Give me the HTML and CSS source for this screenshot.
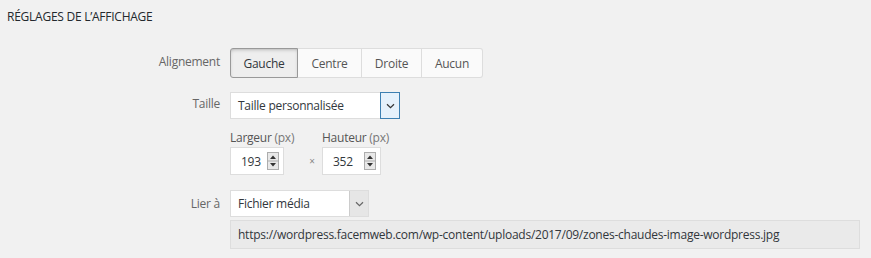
FILE: index.html
```html
<!DOCTYPE html>
<html lang="fr">
<head>
<meta charset="utf-8">
<link rel="stylesheet" href="styles.css">
</head>
<body>
<div class="panel">
  <h2 class="title">RÉGLAGES DE L’AFFICHAGE</h2>

  <div class="row row-align">
    <span class="label">Alignement</span>
    <div class="btn-group">
      <span class="btn active">Gauche</span>
      <span class="btn">Centre</span>
      <span class="btn">Droite</span>
      <span class="btn">Aucun</span>
    </div>
  </div>

  <div class="row row-size">
    <span class="label">Taille</span>
    <div class="select select-size focus">
      <span class="select-text">Taille personnalisée</span>
      <span class="select-arrow"><svg width="9" height="6" viewBox="0 0 9 6"><path d="M1 1.2 L4.5 4.6 L8 1.2" fill="none" stroke="#333" stroke-width="1.2"/></svg></span>
    </div>
  </div>

  <div class="row row-dims">
    <span class="label"></span>
    <div class="dims">
      <div class="dim dim-w">
        <span class="dim-label">Largeur <span class="unit">(px)</span></span>
        <div class="num">
          <span class="num-val">193</span>
          <span class="spin"><svg width="12" height="18" viewBox="0 0 12 18"><rect x="0.5" y="0.5" width="11" height="17" fill="#e8e8e8" stroke="#adadad"/><line x1="0.5" y1="9" x2="11.5" y2="9" stroke="#adadad"/><path d="M3 7 L6 3.5 L9 7 Z" fill="#333"/><path d="M3 11 L6 14.5 L9 11 Z" fill="#333"/></svg></span>
        </div>
      </div>
      <span class="times">×</span>
      <div class="dim">
        <span class="dim-label">Hauteur <span class="unit">(px)</span></span>
        <div class="num num-h">
          <span class="num-val">352</span>
          <span class="spin"><svg width="12" height="18" viewBox="0 0 12 18"><rect x="0.5" y="0.5" width="11" height="17" fill="#e8e8e8" stroke="#adadad"/><line x1="0.5" y1="9" x2="11.5" y2="9" stroke="#adadad"/><path d="M3 7 L6 3.5 L9 7 Z" fill="#333"/><path d="M3 11 L6 14.5 L9 11 Z" fill="#333"/></svg></span>
        </div>
      </div>
    </div>
  </div>

  <div class="row row-link">
    <span class="label">Lier à</span>
    <div class="select select-link">
      <span class="select-text">Fichier média</span>
      <span class="select-arrow grey"><svg width="9" height="6" viewBox="0 0 9 6"><path d="M1 1.2 L4.5 4.6 L8 1.2" fill="none" stroke="#666" stroke-width="1.2"/></svg></span>
    </div>
  </div>

  <div class="row row-url">
    <span class="label"></span>
    <div class="url">https://wordpress.facemweb.com/wp-content/uploads/2017/09/zones-chaudes-image-wordpress.jpg</div>
  </div>
</div>
</body>
</html>
```
FILE: styles.css
```css
html, body {
  margin: 0;
  padding: 0;
  background: #f1f1f1;
  font-family: "Open Sans", "Noto Sans", sans-serif;
  font-size: 12px;
  letter-spacing: -0.25px;
  color: #444;
}
.panel {
  width: 871px;
  height: 258px;
  padding: 0;
  box-sizing: border-box;
}
.title {
  margin: 0;
  padding: 8px 0 0 7px;
  height: 18px;
  line-height: 18px;
  font-size: 12px;
  font-weight: 400;
  color: #23282d;
}
.row {
  display: flex;
  align-items: center;
}
.label {
  width: 220px;
  text-align: right;
  color: #666;
  padding-right: 10px;
  flex: none;
}
.row-align { margin-top: 22px; }
.row-align .label { align-self: flex-start; padding-top: 5px; }
.btn-group {
  display: flex;
  height: 30px;
}
.btn {
  display: flex;
  align-items: center;
  justify-content: center;
  box-sizing: border-box;
  height: 30px;
  border: 1px solid #ddd;
  border-left: none;
  background: #fafafa;
  color: #555;
  font-size: 12px;
}
.btn:first-child { border-left: 1px solid #ddd; border-radius: 3px 0 0 3px; }
.btn:last-child { border-radius: 0 3px 3px 0; }
.btn:nth-child(1) { width: 68px; }
.btn:nth-child(2) { width: 64px; }
.btn:nth-child(3) { width: 60px; }
.btn:nth-child(4) { width: 61px; }
.btn.active {
  background: #eee;
  border: 1px solid #999;
  color: #32373c;
  box-shadow: inset 0 2px 5px -3px rgba(0,0,0,0.5);
}

.row-size { margin-top: 14px; }
.row-size .label { align-self: flex-start; padding-top: 3px; }
.select {
  display: flex;
  box-sizing: border-box;
  height: 27px;
  border: 1px solid #ddd;
  background: #fff;
  color: #32373c;
}
.select-text {
  flex: 1;
  display: flex;
  align-items: center;
  padding-left: 7px;
}
.select-arrow {
  width: 19px;
  display: flex;
  align-items: center;
  justify-content: center;
  box-sizing: border-box;
}
.select-size { width: 170px; }
.select-size .select-arrow {
  border: 1px solid #3c7fb1;
  background: #e5f1fb;
  margin: -1px -1px -1px 0;
  width: 20px;
}
.select-link { width: 139px; }
.select-link .select-arrow {
  border-left: 1px solid #ccc;
  background: #e6e6e6;
}

.row-dims { margin-top: 11px; }
.dims { display: flex; align-items: flex-end; }
.dim { display: flex; flex-direction: column; }
.dim-w { width: 72px; }
.dim-label { color: #555; line-height: 16px; height: 17px; white-space: nowrap; }
.unit { color: #777; }
.num {
  display: flex;
  align-items: center;
  box-sizing: border-box;
  width: 54px;
  height: 28px;
  border: 1px solid #ddd;
  background: #fff;
  color: #32373c;
  padding: 0 4px 0 10px;
}
.num-h { width: 59px; }
.num-val { flex: 1; }
.spin { display: flex; }
.times {
  width: 20px;
  text-align: center;
  color: #888;
  font-size: 10px;
  line-height: 28px;
  height: 28px;
}

.row-link { margin-top: 15px; }
.row-url { margin-top: 3px; }
.url {
  box-sizing: border-box;
  width: 630px;
  height: 29px;
  border: 1px solid #ddd;
  background: #eaeaea;
  color: #32373c;
  display: flex;
  align-items: center;
  padding-left: 7px;
  white-space: nowrap;
}
```
